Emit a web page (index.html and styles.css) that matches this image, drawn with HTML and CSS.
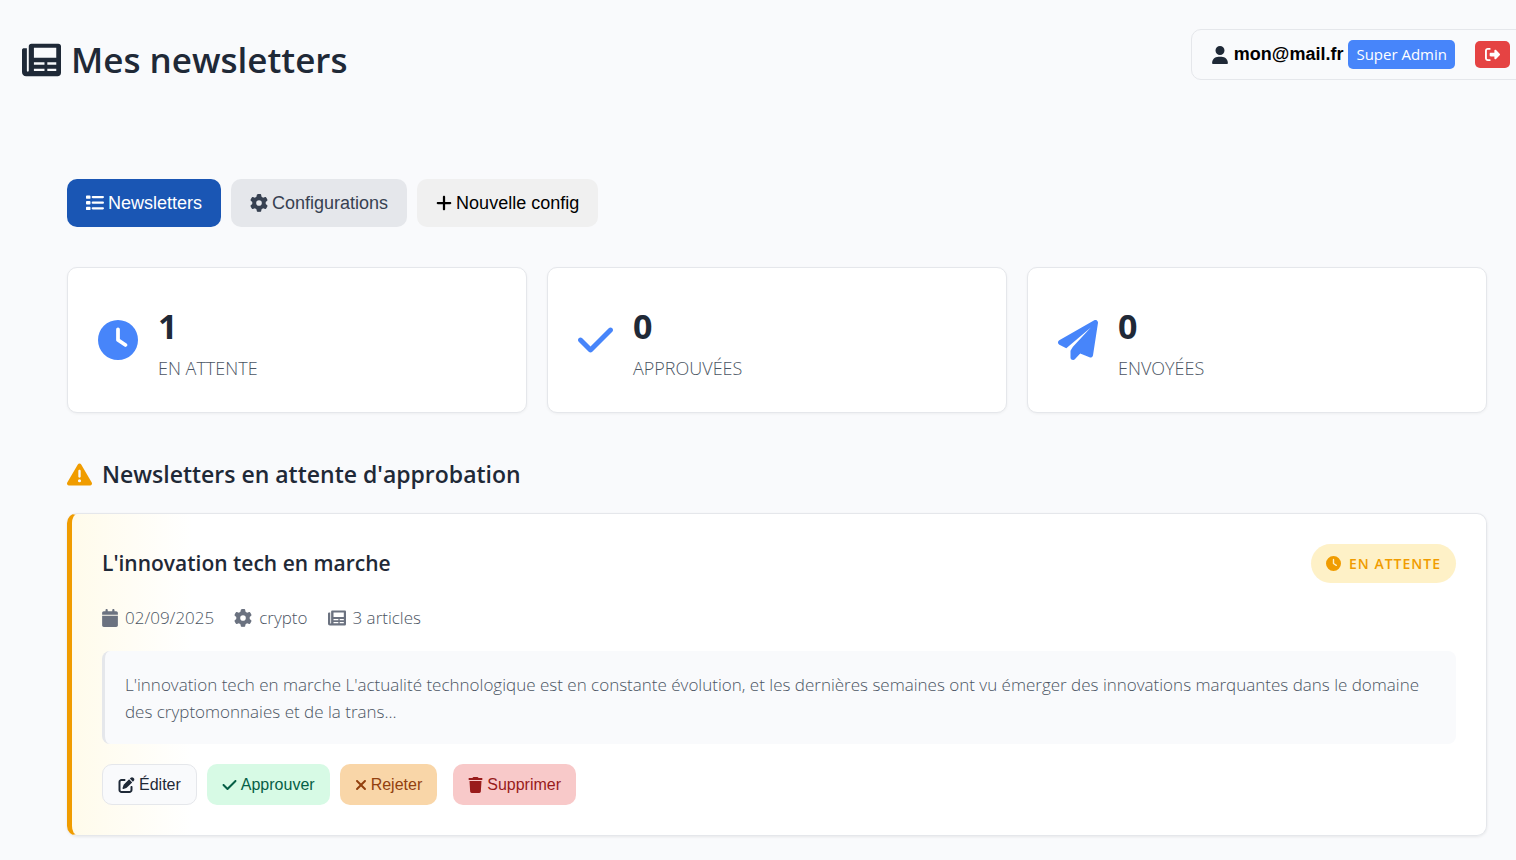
FILE: index.html
```html
<!DOCTYPE html>
<html lang="fr">
<head>
  <meta charset="UTF-8" />
  <title>Mes newsletters</title>
  <meta name="viewport" content="width=device-width, initial-scale=1.0" />
  <link rel="stylesheet" href="styles.css">
</head>
<body>
  <svg class="sprite" aria-hidden="true">
    <symbol id="i-news" viewBox="0 0 576 512"><path fill-rule="evenodd" d="M140 16H536c24 0 40 16 40 40V446c0 30-20 50-50 50H62c-38 0-62-24-62-62V110c0-18 12-28 34-28h38V412c0 10 5 18 14 18s14-8 14-18V56c0-24 16-40 40-40zM176 76V224H506V76zM176 290v36H332v-36zM374 290v36H506v-36zM176 384v36H332v-36zM374 384v36H506v-36z"/></symbol>
    <symbol id="i-user" viewBox="0 0 448 512"><path d="M224 256A128 128 0 1 0 224 0a128 128 0 1 0 0 256zm-45.700 48C79.800 304 0 383.800 0 482.300C0 498.700 13.300 512 29.700 512H418.300c16.400 0 29.700-13.300 29.700-29.700C448 383.800 368.200 304 269.700 304H178.300z"/></symbol>
    <symbol id="i-logout" viewBox="0 0 512 512"><path d="M377.900 105.900L500.700 228.700c7.200 7.200 11.300 17.100 11.300 27.300s-4.100 20.100-11.300 27.300L377.900 406.100c-6.400 6.400-15 9.900-24 9.900c-18.700 0-33.900-15.200-33.900-33.900l0-62.100-128 0c-17.700 0-32-14.300-32-32l0-64c0-17.700 14.300-32 32-32l128 0 0-62.100c0-18.700 15.200-33.900 33.900-33.900c9 0 17.600 3.600 24 9.900zM160 96L96 96c-17.700 0-32 14.300-32 32l0 256c0 17.700 14.300 32 32 32l64 0c17.700 0 32 14.300 32 32s-14.300 32-32 32l-64 0c-53 0-96-43-96-96L0 128C0 75 43 32 96 32l64 0c17.700 0 32 14.300 32 32s-14.300 32-32 32z"/></symbol>
    <symbol id="i-list" viewBox="0 0 512 512"><path d="M24 40h80a24 24 0 0 1 24 24v48a24 24 0 0 1-24 24H24a24 24 0 0 1-24-24V64a24 24 0 0 1 24-24zM24 200h80a24 24 0 0 1 24 24v48a24 24 0 0 1-24 24H24a24 24 0 0 1-24-24v-48a24 24 0 0 1 24-24zM24 360h80a24 24 0 0 1 24 24v48a24 24 0 0 1-24 24H24a24 24 0 0 1-24-24v-48a24 24 0 0 1 24-24zM192 56H480a32 32 0 0 1 0 64H192a32 32 0 0 1 0-64zM192 216H480a32 32 0 0 1 0 64H192a32 32 0 0 1 0-64zM192 376H480a32 32 0 0 1 0 64H192a32 32 0 0 1 0-64z"/></symbol>
    <symbol id="i-gear" viewBox="0 0 512 512"><path d="M495.900 166.600c3.200 8.700 .5 18.400-6.400 24.600l-43.300 39.400c1.100 8.300 1.700 16.800 1.700 25.400s-.6 17.100-1.700 25.400l43.300 39.400c6.900 6.200 9.600 15.900 6.400 24.600c-4.400 11.900-9.700 23.300-15.800 34.300l-4.700 8.100c-6.600 11-14 21.400-22.100 31.200c-5.900 7.200-15.700 9.600-24.500 6.800l-55.700-17.700c-13.400 10.300-28.200 18.900-44 25.400l-12.500 57.100c-2 9.100-9 16.300-18.200 17.800c-13.800 2.300-28 3.500-42.500 3.500s-28.700-1.200-42.500-3.500c-9.200-1.500-16.200-8.700-18.200-17.800l-12.500-57.100c-15.800-6.500-30.600-15.100-44-25.400L83.100 425.900c-8.800 2.800-18.600 .3-24.500-6.800c-8.100-9.800-15.500-20.200-22.100-31.200l-4.700-8.100c-6.100-11-11.400-22.400-15.800-34.300c-3.200-8.700-.5-18.400 6.400-24.600l43.300-39.400C64.600 273.100 64 264.600 64 256s.6-17.100 1.700-25.400L22.400 191.200c-6.900-6.200-9.600-15.900-6.400-24.600c4.400-11.900 9.700-23.300 15.800-34.300l4.700-8.100c6.600-11 14-21.400 22.100-31.200c5.900-7.200 15.700-9.600 24.500-6.800l55.700 17.700c13.400-10.300 28.200-18.900 44-25.400l12.500-57.100c2-9.100 9-16.300 18.200-17.800C227.300 1.200 241.500 0 256 0s28.700 1.200 42.500 3.500c9.200 1.500 16.200 8.700 18.200 17.800l12.500 57.100c15.800 6.500 30.600 15.100 44 25.400l55.700-17.700c8.800-2.800 18.600-.3 24.500 6.800c8.100 9.800 15.500 20.200 22.100 31.200l4.700 8.100c6.100 11 11.400 22.400 15.800 34.300zM256 336a80 80 0 1 0 0-160 80 80 0 1 0 0 160z"/></symbol>
    <symbol id="i-plus" viewBox="0 0 448 512"><path d="M256 80c0-17.700-14.300-32-32-32s-32 14.300-32 32V224H48c-17.700 0-32 14.300-32 32s14.300 32 32 32H192V432c0 17.700 14.300 32 32 32s32-14.300 32-32V288H400c17.700 0 32-14.300 32-32s-14.300-32-32-32H256V80z"/></symbol>
    <symbol id="i-clock" viewBox="0 0 512 512"><path d="M256 0a256 256 0 1 1 0 512A256 256 0 1 1 256 0zM232 120V256c0 8 4 15.500 10.700 20l96 64c11 7.400 25.900 4.400 33.300-6.700s4.400-25.900-6.700-33.300L280 243.200V120c0-13.300-10.700-24-24-24s-24 10.700-24 24z"/></symbol>
    <symbol id="i-check" viewBox="0 0 448 512"><path d="M438.600 105.400c12.500 12.500 12.500 32.800 0 45.300l-256 256c-12.500 12.500-32.800 12.500-45.300 0l-128-128c-12.500-12.500-12.500-32.800 0-45.300s32.800-12.500 45.300 0L160 338.700 393.400 105.400c12.500-12.500 32.800-12.500 45.300 0z"/></symbol>
    <symbol id="i-plane" viewBox="0 0 512 512"><path d="M498.100 5.600c10.100 7 15.400 19.100 13.500 31.200l-64 416c-1.500 9.700-7.400 18.200-16 23s-18.900 5.400-28 1.600L284 427.700l-68.500 74.100c-8.900 9.700-22.900 12.900-35.200 8.100S160 493.200 160 480V396.400c0-4 30-50 34-56L420 96 106 360.800 17.700 316.600C7.100 311.300 .3 300.700 0 288.900s5.900-22.800 16.100-28.700l448-256c10.700-6.100 23.900-5.500 34 1.400z"/></symbol>
    <symbol id="i-warn" viewBox="0 0 512 512"><path d="M256 32c14.200 0 27.300 7.500 34.500 19.800l216 368c7.300 12.400 7.300 27.700 .2 40.100S486.300 480 472 480H40c-14.300 0-27.600-7.700-34.700-20.100s-7-27.800 .2-40.100l216-368C228.700 39.500 241.800 32 256 32zm0 128c-13.300 0-24 10.700-24 24V296c0 13.300 10.700 24 24 24s24-10.700 24-24V184c0-13.300-10.700-24-24-24zm32 224a32 32 0 1 0-64 0 32 32 0 1 0 64 0z"/></symbol>
    <symbol id="i-calendar" viewBox="0 0 448 512"><path d="M96 32V64H48C21.500 64 0 85.500 0 112v48H448V112c0-26.500-21.500-48-48-48H352V32c0-17.700-14.300-32-32-32s-32 14.300-32 32V64H160V32c0-17.700-14.300-32-32-32S96 14.300 96 32zM448 192H0V464c0 26.500 21.500 48 48 48H400c26.500 0 48-21.500 48-48V192z"/></symbol>
    <symbol id="i-edit" viewBox="0 0 512 512"><path d="M471.600 21.700c-21.900-21.900-57.300-21.900-79.200 0L362.300 51.700l97.900 97.900 30.100-30.100c21.900-21.900 21.900-57.300 0-79.200L471.600 21.700zm-299.200 220c-6.100 6.100-10.800 13.600-13.500 21.900l-29.600 88.800c-2.900 8.600-.6 18.100 5.800 24.600s15.900 8.700 24.600 5.800l88.800-29.600c8.200-2.700 15.700-7.400 21.900-13.500L437.700 172.300 339.700 74.300 172.400 241.700zM96 64C43 64 0 107 0 160V416c0 53 43 96 96 96H352c53 0 96-43 96-96V320c0-17.700-14.300-32-32-32s-32 14.300-32 32v96c0 17.700-14.300 32-32 32H96c-17.700 0-32-14.300-32-32V160c0-17.700 14.300-32 32-32h96c17.700 0 32-14.300 32-32s-14.300-32-32-32H96z"/></symbol>
    <symbol id="i-xmark" viewBox="0 0 384 512"><path d="M342.600 150.600c12.500-12.500 12.500-32.800 0-45.300s-32.800-12.500-45.300 0L192 210.700 86.600 105.400c-12.500-12.500-32.800-12.500-45.300 0s-12.500 32.800 0 45.300L146.700 256 41.400 361.400c-12.500 12.500-12.500 32.800 0 45.300s32.800 12.500 45.300 0L192 301.300 297.400 406.600c12.500 12.500 32.800 12.500 45.300 0s12.500-32.800 0-45.300L237.300 256 342.600 150.600z"/></symbol>
    <symbol id="i-trash" viewBox="0 0 448 512"><path d="M135.200 17.700L128 32H32C14.300 32 0 46.300 0 64S14.300 96 32 96H416c17.700 0 32-14.300 32-32s-14.300-32-32-32H320l-7.200-14.300C307.400 6.800 296.300 0 284.200 0H163.800c-12.100 0-23.200 6.800-28.600 17.700zM416 128H32L53.200 467c1.600 25.300 22.600 45 47.900 45H346.900c25.300 0 46.300-19.700 47.900-45L416 128z"/></symbol>
  </svg>

  <header class="header">
    <h1><svg class="icon"><use href="#i-news"/></svg>Mes newsletters</h1>
    <div class="user-box">
      <svg class="icon"><use href="#i-user"/></svg>
      <strong>mon@mail.fr</strong>
      <span class="role">Super Admin</span>
      <a class="logout" href="#" aria-label="Déconnexion"><svg class="icon"><use href="#i-logout"/></svg></a>
    </div>
  </header>

  <main class="container">
    <nav class="tabs">
      <button class="tab active"><svg class="icon"><use href="#i-list"/></svg>Newsletters</button>
      <button class="tab muted"><svg class="icon"><use href="#i-gear"/></svg>Configurations</button>
      <button class="tab"><svg class="icon narrow"><use href="#i-plus"/></svg>Nouvelle config</button>
    </nav>

    <section class="stats">
      <div class="stat-card">
        <svg class="icon"><use href="#i-clock"/></svg>
        <div>
          <div class="stat-number">1</div>
          <div class="stat-label">EN ATTENTE</div>
        </div>
      </div>
      <div class="stat-card">
        <svg class="icon narrow"><use href="#i-check"/></svg>
        <div>
          <div class="stat-number">0</div>
          <div class="stat-label">APPROUVÉES</div>
        </div>
      </div>
      <div class="stat-card">
        <svg class="icon"><use href="#i-plane"/></svg>
        <div>
          <div class="stat-number">0</div>
          <div class="stat-label">ENVOYÉES</div>
        </div>
      </div>
    </section>

    <h2><svg class="icon"><use href="#i-warn"/></svg>Newsletters en attente d'approbation</h2>

    <article class="newsletter">
      <div class="newsletter-head">
        <h3>L'innovation tech en marche</h3>
        <span class="status"><svg class="icon"><use href="#i-clock"/></svg>EN ATTENTE</span>
      </div>
      <div class="meta">
        <span><svg class="icon narrow"><use href="#i-calendar"/></svg>02/09/2025</span>
        <span><svg class="icon"><use href="#i-gear"/></svg>crypto</span>
        <span><svg class="icon"><use href="#i-news"/></svg>3 articles</span>
      </div>
      <p class="preview">L'innovation tech en marche L'actualité technologique est en constante évolution, et les dernières semaines ont vu émerger des innovations marquantes dans le domaine des cryptomonnaies et de la trans...</p>
      <div class="actions">
        <button class="btn edit"><svg class="icon"><use href="#i-edit"/></svg>Éditer</button>
        <button class="btn approve"><svg class="icon"><use href="#i-check"/></svg>Approuver</button>
        <button class="btn reject"><svg class="icon"><use href="#i-xmark"/></svg>Rejeter</button>
        <button class="btn delete"><svg class="icon"><use href="#i-trash"/></svg>Supprimer</button>
      </div>
    </article>
  </main>
</body>
</html>
```
FILE: styles.css
```css
* {
  box-sizing: border-box;
}
body {
  margin: 0;
  background: #f9fafc;
  color: #1f2937;
  font-family: 'Segoe UI', 'Open Sans', sans-serif;
  font-size: 17px;
  font-weight: 300;
  line-height: 27px;
  overflow-x: hidden;
}
h1, h2, h3, p {
  margin: 0;
  font-weight: 600;
}
button {
  font-family: Arial, 'Liberation Sans', sans-serif;
  border: none;
  cursor: pointer;
}
.sprite {
  display: none;
}
.icon {
  width: 18px;
  height: 18px;
  flex-shrink: 0;
  fill: currentColor;
}
.header {
  display: flex;
  justify-content: space-between;
  align-items: flex-start;
  padding: 29px 0 0 22px;
}
h1 {
  display: flex;
  align-items: center;
  gap: 10px;
  font-size: 35px;
  line-height: 62px;
}
h1 .icon {
  width: 39px;
  height: 36px;
}
.user-box {
  display: flex;
  align-items: center;
  gap: 5px;
  height: 51px;
  padding: 0 20px 0 19px;
  margin-right: -15px;
  border: 1px solid #e5e7eb;
  border-radius: 10px;
}
.user-box strong {
  color: #000;
  font-family: Arial, 'Liberation Sans', sans-serif;
  font-size: 18px;
  font-weight: 700;
}
.role {
  padding: 1px 8px;
  border-radius: 5px;
  background: #4785fa;
  color: white;
  font-size: 15px;
  font-weight: 400;
}
.logout {
  display: flex;
  padding: 6px 10px;
  margin-left: 15px;
  border-radius: 5px;
  background: #e54343;
  color: white;
}
.logout .icon {
  width: 15px;
  height: 15px;
}
.container {
  padding: 88px 29px 24px 67px;
}
.tabs {
  display: flex;
  gap: 10px;
  margin-bottom: 40px;
}
.tab {
  display: flex;
  align-items: center;
  gap: 4px;
  height: 48px;
  padding: 0 19px;
  border-radius: 10px;
  background: #f0f0f0;
  color: #000;
  font-size: 18px;
}
.tab .narrow,
.meta .narrow {
  width: 16px;
}
.tab.active {
  background: #1a56b4;
  color: white;
}
.tab.muted {
  background: #e5e7eb;
  color: #374151;
}
.stats {
  display: grid;
  grid-template-columns: repeat(3, 1fr);
  gap: 20px;
  margin-bottom: 40px;
}
.stat-card {
  display: flex;
  align-items: center;
  gap: 20px;
  padding: 30px;
  background: white;
  border: 1px solid #e5e7eb;
  border-radius: 10px;
  box-shadow: 0 1px 3px rgba(0, 0, 0, 0.05);
}
.stat-card .icon {
  width: 40px;
  height: 40px;
  color: #4785fa;
}
.stat-card .narrow {
  width: 35px;
}
.stat-number {
  font-size: 34px;
  font-weight: 700;
  line-height: 57px;
}
.stat-label {
  color: #4b5563;
  font-size: 18px;
}
h2 {
  display: flex;
  align-items: center;
  gap: 10px;
  margin-bottom: 18px;
  font-size: 23px;
  line-height: 42px;
}
h2 .icon {
  width: 25px;
  height: 25px;
  color: #f09c00;
}
.newsletter {
  padding: 30px;
  background: linear-gradient(90deg, #fffbeb 0, #fff 120px);
  border: 1px solid #e5e7eb;
  border-left: 5px solid #f09c00;
  border-radius: 10px;
  box-shadow: 0 1px 3px rgba(0, 0, 0, 0.08);
}
.newsletter-head {
  display: flex;
  justify-content: space-between;
  align-items: center;
  margin-bottom: 21px;
}
h3 {
  font-size: 21px;
}
.status {
  display: flex;
  align-items: center;
  gap: 8px;
  padding: 6px 15px;
  border-radius: 20px;
  background: #fef1c7;
  color: #f09c00;
  font-size: 14px;
  font-weight: 600;
  letter-spacing: 1px;
}
.status .icon {
  width: 15px;
  height: 15px;
}
.meta {
  display: flex;
  gap: 20px;
  margin-bottom: 20px;
  color: #4b5563;
}
.meta span {
  display: flex;
  align-items: center;
  gap: 7px;
}
.meta .icon {
  color: #6b7280;
}
.preview {
  padding: 20px 20px 19px;
  margin-bottom: 20px;
  background: #f9fafc;
  border-left: 3px solid #e5e7eb;
  border-radius: 8px;
  color: #4b5563;
  font-weight: 300;
}
.actions {
  display: flex;
  gap: 10px;
}
.btn {
  display: flex;
  align-items: center;
  gap: 4px;
  height: 41px;
  padding: 0 15px;
  border-radius: 10px;
  font-size: 16px;
}
.btn .icon {
  width: 15px;
  height: 16px;
}
.edit {
  background: #f9fafc;
  border: 1px solid #e5e7eb;
  color: #1f2937;
}
.edit .icon {
  width: 17px;
}
.approve {
  background: #d7fae5;
  color: #065f46;
}
.reject {
  background: #f9d6a8;
  color: #92400e;
}
.reject .icon {
  width: 12px;
}
.delete {
  margin-left: 6px;
  background: #f8c9c9;
  color: #991b1b;
}
```
